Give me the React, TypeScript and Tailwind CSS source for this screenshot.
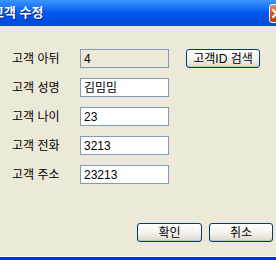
import React from 'react';

const font = { fontFamily: '"Liberation Sans", "Noto Sans CJK KR", sans-serif' };

function XpButton({ children, className = '' }: { children: React.ReactNode; className?: string }) {
    return (
        <button
            className={`h-[19px] rounded-[3px] border border-[#003C74] bg-gradient-to-b from-[#FFFFFF] via-[#F4F3EE] to-[#DCD9CE] text-[12px] leading-none text-black shadow-[inset_0_-1px_0_#C5C2B8] ${className}`}
        >
            {children}
        </button>
    );
}

function Field({ label, value, readOnly }: { label: string; value: string; readOnly?: boolean }) {
    return (
        <div className="flex h-[19px] items-center">
            <span className="w-[68px] text-[12px] text-black">{label}</span>
            <div className={`flex h-[19px] w-[89px] items-center border border-[#7F9DB9] px-[3px] text-[12px] text-black ${readOnly ? 'bg-[#ECE9D8]' : 'bg-white'}`}>
                {value}
            </div>
        </div>
    );
}

export default function App() {
    return (
        <div className="flex h-[260px] w-[276px] flex-col overflow-hidden bg-[#ECE9D8]" style={font}>
            <div className="relative flex h-[26px] items-center bg-gradient-to-b from-[#3D95FF] via-[#0058EE] to-[#0049D6]">
                <span className="ml-[-8px] text-[13px] font-bold text-white [text-shadow:1px_1px_0_#0A1E8A]">고객 수정</span>
                <div className="absolute left-[269px] top-[4px] flex h-[19px] w-[19px] items-center justify-center rounded-[3px] border border-white bg-gradient-to-b from-[#EA8A6E] via-[#D9542B] to-[#C23A10]">
                    <svg width="11" height="11" viewBox="0 0 11 11" className="ml-[-4px]">
                        <path d="M2 2 L9 9 M9 2 L2 9" stroke="white" strokeWidth="2" strokeLinecap="square" />
                    </svg>
                </div>
            </div>

            <div className="flex flex-1 flex-col pl-[12px] pt-[23px]">
                <div className="flex items-center">
                    <Field label="고객 아뒤" value="4" readOnly />
                    <XpButton className="ml-[17px] w-[74px]">고객ID 검색</XpButton>
                </div>
                <div className="mt-[10px] flex flex-col gap-[10px]">
                    <Field label="고객 성명" value="김밈밈" />
                    <Field label="고객 나이" value="23" />
                    <Field label="고객 전화" value="3213" />
                    <Field label="고객 주소" value="23213" />
                </div>
                <div className="mt-[39px] flex gap-[7px] pl-[125px]">
                    <XpButton className="w-[65px]">확인</XpButton>
                    <XpButton className="w-[64px]">취소</XpButton>
                </div>
            </div>

            <div className="h-[1px] bg-white" />
            <div className="h-[3px] bg-[#0831D9]" />
        </div>
    );
}
